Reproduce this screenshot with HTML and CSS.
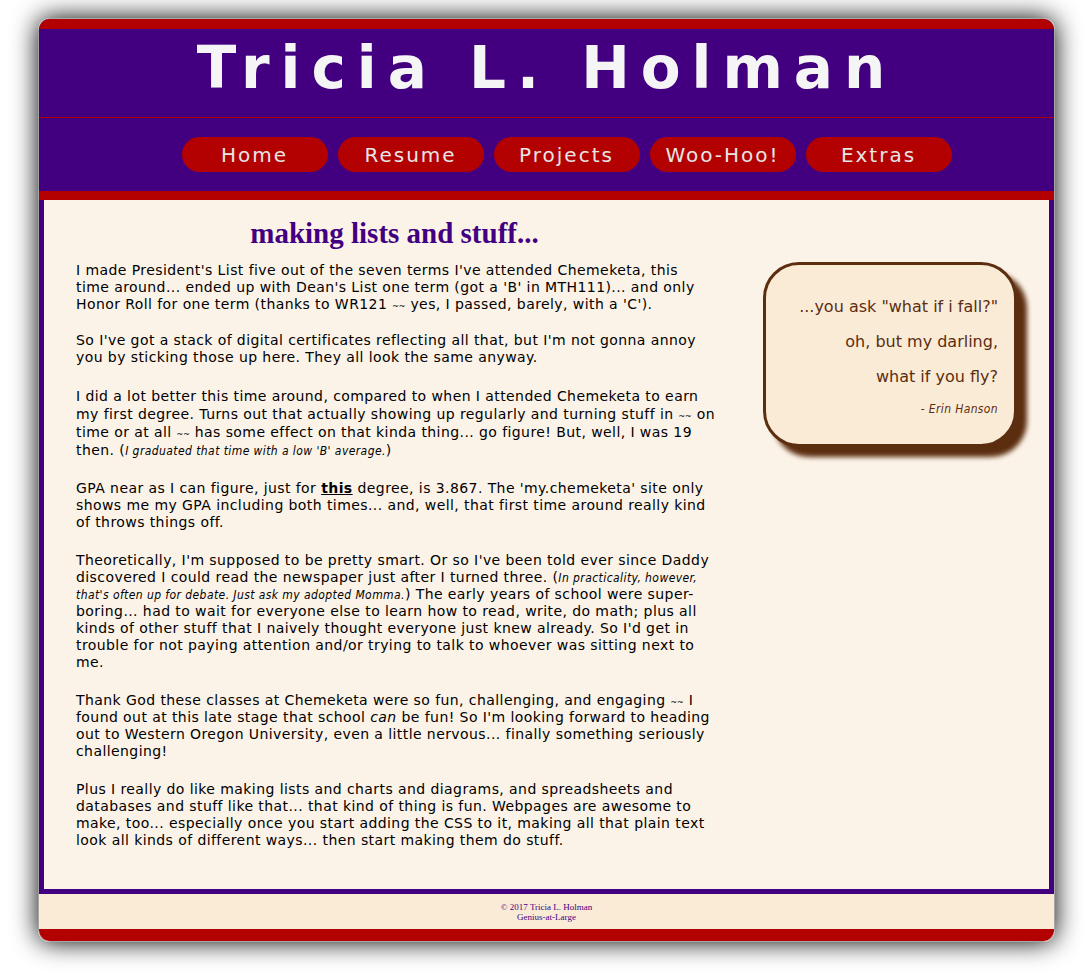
FILE: index.html
```html
<!DOCTYPE html>
<html lang="en">
<head>
<meta charset="utf-8">
<title>Tricia L. Holman</title>
<link rel="stylesheet" href="styles.css">
</head>
<body>
<div class="page">
  <header class="banner">
    <h1 class="site-title">Tricia L. Holman</h1>
    <nav class="menu">
      <a class="menu-link" href="#">Home</a>
      <a class="menu-link" href="#">Resume</a>
      <a class="menu-link" href="#">Projects</a>
      <a class="menu-link" href="#">Woo-Hoo!</a>
      <a class="menu-link" href="#">Extras</a>
    </nav>
  </header>
  <main class="content">
    <article class="story">
      <h2 class="story-title">making lists and stuff...</h2>
      <p class="close">I made President's List five out of the seven terms I've attended Chemeketa, this time around... ended up with Dean's List one term (got a 'B' in MTH111)... and only Honor Roll for one term (thanks to WR121 <span class="wave">~~</span> yes, I passed, barely, with a 'C').</p>
      <p>So I've got a stack of digital certificates reflecting all that, but I'm not gonna annoy you by sticking those up here. They all look the same anyway.</p>
      <p class="roomy">I did a lot better this time around, compared to when I attended Chemeketa to earn my first degree. Turns out that actually showing up regularly and turning stuff in <span class="wave">~~</span> on time or at all <span class="wave">~~</span> has some effect on that kinda thing... go figure! But, well, I was 19 then. (<em class="aside-note">I graduated that time with a low 'B' average.</em>)</p>
      <p>GPA near as I can figure, just for <strong class="stress">this</strong> degree, is 3.867. The 'my.chemeketa' site only shows me my GPA including both times... and, well, that first time around really kind of throws things off.</p>
      <p>Theoretically, I'm supposed to be pretty smart. Or so I've been told ever since Daddy discovered I could read the newspaper just after I turned three. (<em class="aside-note">In practicality, however, that's often up for debate. Just ask my adopted Momma.</em>) The early years of school were super-boring... had to wait for everyone else to learn how to read, write, do math; plus all kinds of other stuff that I naively thought everyone just knew already. So I'd get in trouble for not paying attention and/or trying to talk to whoever was sitting next to me.</p>
      <p>Thank God these classes at Chemeketa were so fun, challenging, and engaging <span class="wave">~~</span> I found out at this late stage that school <em>can</em> be fun! So I'm looking forward to heading out to Western Oregon University, even a little nervous... finally something seriously challenging!</p>
      <p>Plus I really do like making lists and charts and diagrams, and spreadsheets and databases and stuff like that... that kind of thing is fun. Webpages are awesome to make, too... especially once you start adding the CSS to it, making all that plain text look all kinds of different ways... then start making them do stuff.</p>
    </article>
    <aside class="quote">
      <p class="quote-line">...you ask "what if i fall?"</p>
      <p class="quote-line">oh, but my darling,</p>
      <p class="quote-line">what if you fly?</p>
      <p class="quote-author">- Erin Hanson</p>
    </aside>
  </main>
  <footer class="footer">
    <p>© 2017 Tricia L. Holman</p>
    <p>Genius-at-Large</p>
  </footer>
</div>
</body>
</html>
```
FILE: styles.css
```css
* {
  box-sizing: border-box;
}

body {
  margin: 0;
  padding: 18px 36px 33px 38px;
  background: #fff;
  color: #000;
  font-family: Verdana, "DejaVu Sans", sans-serif;
  font-size: 14px;
  line-height: 17px;
}

p {
  margin: 0;
}

.page {
  max-width: 1200px;
  margin: 0 auto;
  overflow: hidden;
  border: 1px solid #a6a6a6;
  border-radius: 12px;
  box-shadow: 0 0 26px #000;
}

.banner {
  border-top: 10px solid #b30000;
  border-bottom: 9px solid #b30000;
  background: #420080;
}

.site-title {
  margin: 0;
  padding: 1px 0 11px;
  border-bottom: 1px solid #b30000;
  color: #f5f5f5;
  font-size: 58px;
  font-weight: bold;
  letter-spacing: 11px;
  line-height: 76px;
  text-align: center;
}

.menu {
  display: flex;
  justify-content: center;
  gap: 10px;
  padding: 19px 0 19px 40px;
}

.menu-link {
  width: 146px;
  padding-top: 2px;
  border-radius: 18px;
  background: #b30000;
  color: #e6e6e6;
  font-size: 20px;
  letter-spacing: 2px;
  line-height: 33px;
  text-align: center;
  text-decoration: none;
}

.content {
  display: grid;
  grid-template-columns: 1fr 254px;
  align-items: start;
  gap: 50px;
  padding: 19px 32px 40px;
  border: solid #420080;
  border-width: 0 5px 5px;
  background: #fcf3e8;
}

.story {
  display: flex;
  flex-direction: column;
  gap: 21px;
  letter-spacing: 0.03em;
}

.story-title {
  margin: 0 0 -6px;
  color: #420080;
  font-family: Georgia, "Liberation Serif", serif;
  font-size: 29px;
  letter-spacing: 0;
  line-height: 28px;
  text-align: center;
}

.close {
  margin-bottom: -2px;
}

.roomy {
  margin-right: -6px;
  line-height: 18px;
}

.wave {
  font-size: 8px;
  letter-spacing: 0;
  line-height: 8px;
}

.aside-note {
  font-family: "DejaVu Sans Condensed", "DejaVu Sans", sans-serif;
  font-size: 12px;
  line-height: 12px;
}

.stress {
  text-decoration: underline;
}

.quote {
  margin-top: 43px;
  padding: 24px 16px 22px;
  border: 3px solid #5c2e10;
  border-radius: 36px;
  background: #faebd7;
  box-shadow: 10px 10px 5px #5c2e10;
  color: #5c2e10;
  text-align: right;
}

.quote-line {
  font-size: 16px;
  line-height: 35px;
}

.quote-author {
  padding-top: 2px;
  font-family: "DejaVu Sans Condensed", "DejaVu Sans", sans-serif;
  font-size: 12px;
  font-style: italic;
  letter-spacing: 0.03em;
  line-height: 26px;
}

.footer {
  padding: 8px 0 7px;
  border-bottom: 12px solid #b30000;
  background: #faebd7;
  color: #420080;
  font-family: Georgia, "Liberation Serif", serif;
  font-size: 9px;
  line-height: 10px;
  text-align: center;
}
```
